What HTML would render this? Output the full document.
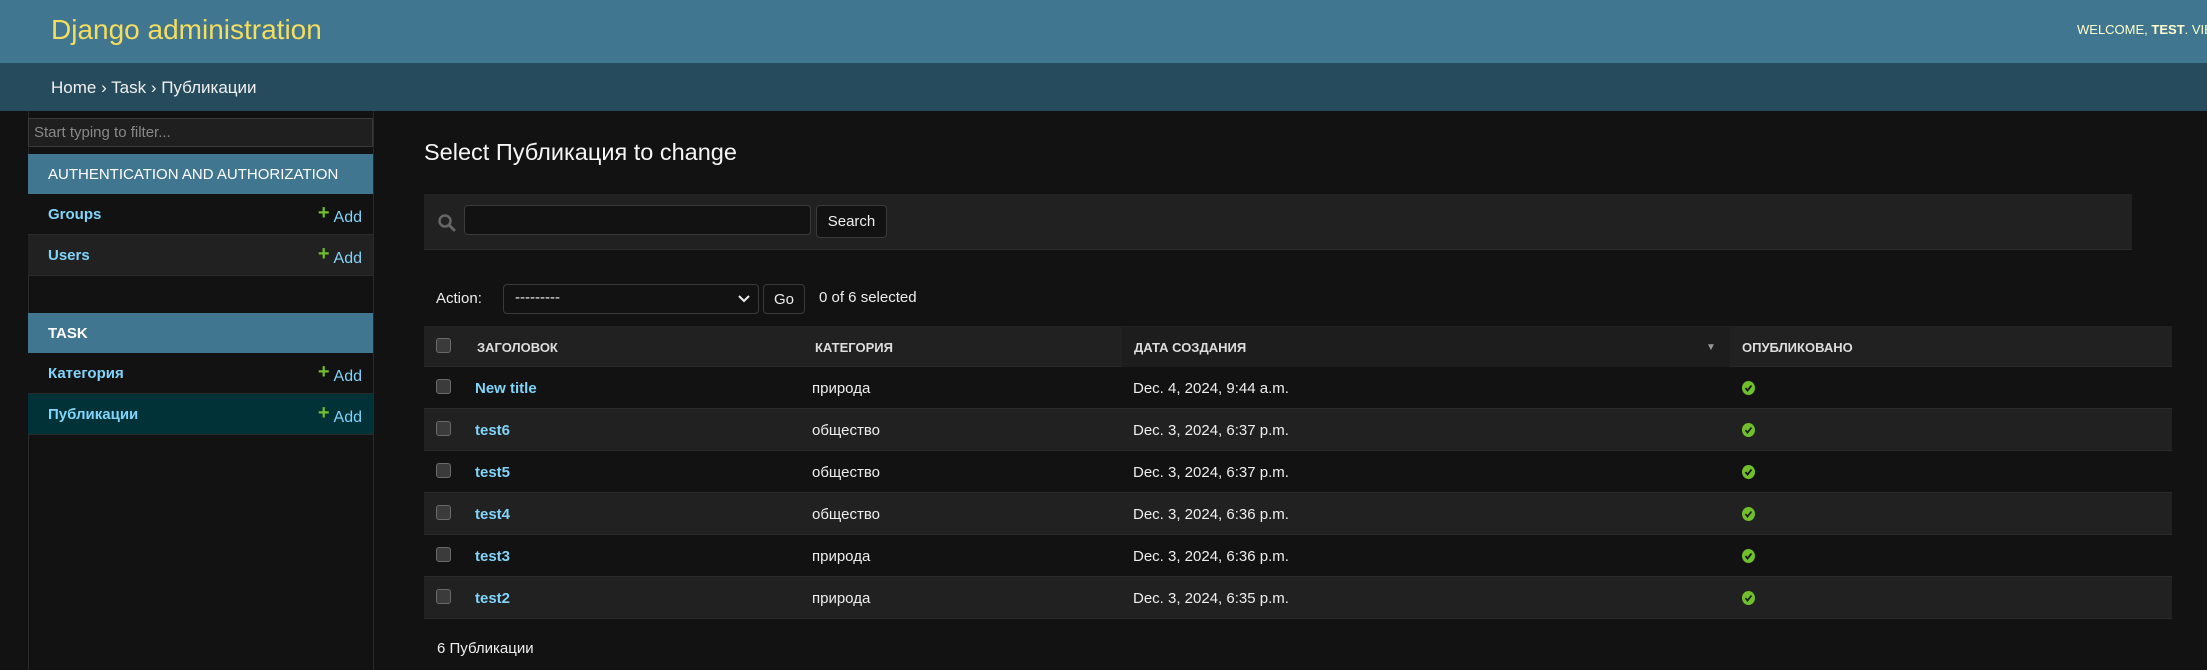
<!DOCTYPE html>
<html><head><meta charset="utf-8">
<style>
*{box-sizing:border-box;margin:0;padding:0}
html,body{width:2207px;height:670px;overflow:hidden;background:#121212;font-family:"Liberation Sans","Noto Sans CJK SC",sans-serif;color:#eee;position:relative}
.abs{position:absolute}
#hdr{left:0;top:0;width:2207px;height:63px;background:#417690;overflow:hidden}
#hdr .t{left:51px;top:14px;font-size:28px;color:#f5dd5d;white-space:nowrap}
#hdr .w{left:2077px;top:22px;font-size:13px;color:#ffc;white-space:nowrap;width:130px;overflow:hidden}
#bc{left:0;top:63px;width:2207px;height:48px;background:#264b5d}
#bc span{position:absolute;left:51px;top:15px;font-size:17px;color:#f0f0f0;white-space:nowrap}
#sb{left:28px;top:111px;width:346px;height:559px;border-right:1px solid #2a2a2a;border-left:1px solid #2a2a2a}
.filt{left:28px;top:118px;width:345px;height:29px;background:#1f1f1f;border:1px solid #3a3a3a;font-size:15px;color:#888;padding:5px 5px}
.mh{left:28px;width:345px;height:40px;background:#417690;font-size:15px;color:#fff;padding:12px 20px;white-space:nowrap}
.mr{left:28px;width:345px;height:41px;border-bottom:1px solid #2a2a2a;font-size:15px;font-weight:bold;color:#81d4fa;padding:12px 20px}
.mr .add{position:absolute;right:11px;top:11px;font-weight:normal;font-size:16px;color:#81d4fa}
.mr .add b{color:#70bf2b;font-size:20px;position:relative;top:-3px;margin-right:4px}
h1{position:absolute;left:424px;top:139px;font-size:23.5px;font-weight:normal;color:#f5f5f5;white-space:nowrap}
#srch{left:424px;top:194px;width:1708px;height:56px;background:#212121;border-bottom:1px solid #2a2a2a}
.inp{left:464px;top:205px;width:347px;height:30px;background:#121212;border:1px solid #3a3a3a;border-radius:4px}
.btn{background:#121212;border:1px solid #3a3a3a;border-radius:4px;color:#eee;font-size:15px;text-align:center}
.txt{font-size:15px;color:#eee;white-space:nowrap}
#tbl{left:424px;top:326px;width:1748px}
.row{position:relative;height:42px;border-bottom:1px solid #2a2a2a}
.row.h{background:#212121;height:41px}
.cb{position:absolute;left:12px;top:12px;width:15px;height:15px;background:#3b3b3b;border:1px solid #6a6a6a;border-radius:3px}
.c{position:absolute;top:13px;font-size:15px;white-space:nowrap}
.h .c{font-size:13px;font-weight:bold;color:#ddd;top:14px}
.lk{color:#81d4fa;font-weight:bold}
.ok{position:absolute;left:1318px;top:14px;width:13px;height:14px}
</style></head><body>
<div id="hdr" class="abs"><div class="t abs">Django administration</div><div class="w abs">WELCOME, <b>TEST</b>. VIEW SITE</div></div>
<div id="bc" class="abs"><span>Home › Task › Публикации</span></div>
<div id="sb" class="abs"></div>
<div class="filt abs">Start typing to filter...</div>
<div class="mh abs" style="top:154px">AUTHENTICATION AND AUTHORIZATION</div>
<div class="mr abs" style="top:194px;background:#121212">Groups<span class="add"><b>+</b>Add</span></div>
<div class="mr abs" style="top:235px;background:#212121">Users<span class="add"><b>+</b>Add</span></div>
<div class="mh abs" style="top:313px;font-weight:bold">TASK</div>
<div class="mr abs" style="top:353px;background:#121212">Категория<span class="add"><b>+</b>Add</span></div>
<div class="mr abs" style="top:394px;background:#003238">Публикации<span class="add"><b>+</b>Add</span></div>
<h1>Select Публикация to change</h1>
<div id="srch" class="abs"></div>
<svg class="abs" style="left:437px;top:213px" width="20" height="20" viewBox="0 0 20 20"><circle cx="8" cy="8" r="5.5" fill="none" stroke="#666" stroke-width="2.5"/><path d="M12 12l5 5" stroke="#666" stroke-width="3" stroke-linecap="round"/></svg>
<div class="inp abs"></div>
<div class="btn abs" style="left:816px;top:205px;width:71px;height:33px;line-height:31px">Search</div>
<div class="txt abs" style="left:436px;top:290px">Action:</div>
<div class="btn abs" style="left:503px;top:284px;width:256px;height:30px;text-align:left;padding:4px 11px">---------<svg style="position:absolute;right:8px;top:10px" width="12" height="8" viewBox="0 0 12 8"><path d="M1 1l5 5 5-5" stroke="#eee" stroke-width="2" fill="none"/></svg></div>
<div class="btn abs" style="left:763px;top:284px;width:42px;height:30px;line-height:29px">Go</div>
<div class="txt abs" style="left:819px;top:289px">0 of 6 selected</div>
<div id="tbl" class="abs">
<div class="row h"><span class="cb"></span><span class="c" style="left:53px">ЗАГОЛОВОК</span><span class="c" style="left:391px">КАТЕГОРИЯ</span><div style="position:absolute;left:698px;top:1px;width:608px;height:40px;background:#1d1d1d"></div><span class="c" style="left:710px">ДАТА СОЗДАНИЯ</span><span class="c" style="left:1282px;color:#999;font-size:10px;top:16px">▼</span><span class="c" style="left:1318px">ОПУБЛИКОВАНО</span></div>
<div class="row"><span class="cb"></span><span class="c lk" style="left:51px">New title</span><span class="c" style="left:388px">природа</span><span class="c" style="left:709px">Dec. 4, 2024, 9:44 a.m.</span><svg class="ok" viewBox="0 0 13 14"><ellipse cx="6.5" cy="7" rx="6.5" ry="7" fill="#70bf2b"/><path d="M3.5 7l2 2.5 4-5" stroke="#121212" stroke-width="1.8" fill="none"/></svg></div>
<div class="row" style="background:#212121"><span class="cb"></span><span class="c lk" style="left:51px">test6</span><span class="c" style="left:388px">общество</span><span class="c" style="left:709px">Dec. 3, 2024, 6:37 p.m.</span><svg class="ok" viewBox="0 0 13 14"><ellipse cx="6.5" cy="7" rx="6.5" ry="7" fill="#70bf2b"/><path d="M3.5 7l2 2.5 4-5" stroke="#212121" stroke-width="1.8" fill="none"/></svg></div>
<div class="row"><span class="cb"></span><span class="c lk" style="left:51px">test5</span><span class="c" style="left:388px">общество</span><span class="c" style="left:709px">Dec. 3, 2024, 6:37 p.m.</span><svg class="ok" viewBox="0 0 13 14"><ellipse cx="6.5" cy="7" rx="6.5" ry="7" fill="#70bf2b"/><path d="M3.5 7l2 2.5 4-5" stroke="#121212" stroke-width="1.8" fill="none"/></svg></div>
<div class="row" style="background:#212121"><span class="cb"></span><span class="c lk" style="left:51px">test4</span><span class="c" style="left:388px">общество</span><span class="c" style="left:709px">Dec. 3, 2024, 6:36 p.m.</span><svg class="ok" viewBox="0 0 13 14"><ellipse cx="6.5" cy="7" rx="6.5" ry="7" fill="#70bf2b"/><path d="M3.5 7l2 2.5 4-5" stroke="#212121" stroke-width="1.8" fill="none"/></svg></div>
<div class="row"><span class="cb"></span><span class="c lk" style="left:51px">test3</span><span class="c" style="left:388px">природа</span><span class="c" style="left:709px">Dec. 3, 2024, 6:36 p.m.</span><svg class="ok" viewBox="0 0 13 14"><ellipse cx="6.5" cy="7" rx="6.5" ry="7" fill="#70bf2b"/><path d="M3.5 7l2 2.5 4-5" stroke="#121212" stroke-width="1.8" fill="none"/></svg></div>
<div class="row" style="background:#212121"><span class="cb"></span><span class="c lk" style="left:51px">test2</span><span class="c" style="left:388px">природа</span><span class="c" style="left:709px">Dec. 3, 2024, 6:35 p.m.</span><svg class="ok" viewBox="0 0 13 14"><ellipse cx="6.5" cy="7" rx="6.5" ry="7" fill="#70bf2b"/><path d="M3.5 7l2 2.5 4-5" stroke="#212121" stroke-width="1.8" fill="none"/></svg></div>
</div>
<div class="txt abs" style="left:437px;top:640px">6 Публикации</div>
</body></html>
